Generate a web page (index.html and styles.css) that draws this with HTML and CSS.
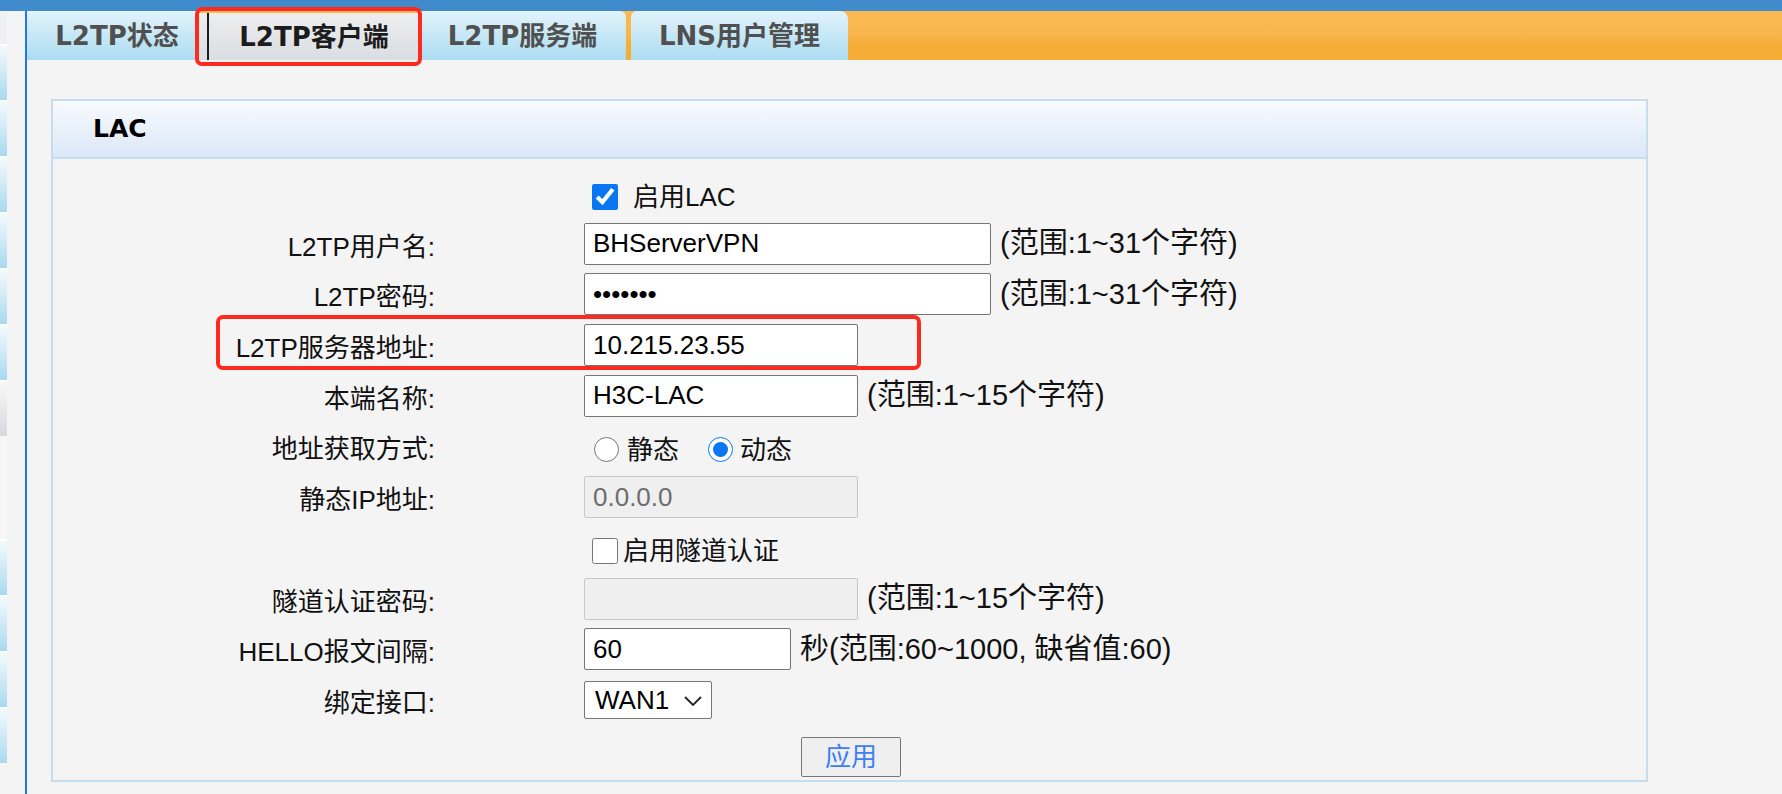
FILE: index.html
```html
<!DOCTYPE html>
<html lang="zh-CN">
<head>
<meta charset="utf-8">
<title>L2TP客户端</title>
<link rel="stylesheet" href="styles.css">
</head>
<body>
<div class="topbar"></div>
<div class="layout">
  <nav class="sidenav">
    <div class="nav-head"></div>
    <div class="nav-item"></div>
    <div class="nav-item"></div>
    <div class="nav-item"></div>
    <div class="nav-item"></div>
    <div class="nav-item"></div>
    <div class="nav-item"></div>
    <div class="nav-item nav-current"></div>
    <div class="nav-gap"></div>
    <div class="nav-item"></div>
    <div class="nav-item"></div>
    <div class="nav-item"></div>
    <div class="nav-item"></div>
  </nav>
  <main class="main">
    <div class="tabbar">
      <div class="tab tab-first">L2TP状态</div>
      <div class="tab tab-active">L2TP客户端</div>
      <div class="tab tab-third">L2TP服务端</div>
      <div class="tab tab-last">LNS用户管理</div>
    </div>
    <div class="content">
      <section class="panel">
        <div class="panel-head">LAC</div>
        <div class="panel-body">
          <div class="form">
            <div class="lbl"></div>
            <div class="ctl"><label class="check check-lac"><input type="checkbox" checked><span>启用LAC</span></label></div>

            <div class="lbl">L2TP用户名:</div>
            <div class="ctl"><input class="inp w-lg" type="text" value="BHServerVPN"><span class="hint">(范围:1~31个字符)</span></div>

            <div class="lbl">L2TP密码:</div>
            <div class="ctl"><input class="inp w-lg" type="password" value="1234567"><span class="hint">(范围:1~31个字符)</span></div>

            <div class="lbl">L2TP服务器地址:</div>
            <div class="ctl"><input class="inp w-md" type="text" value="10.215.23.55"></div>

            <div class="lbl">本端名称:</div>
            <div class="ctl"><input class="inp w-md" type="text" value="H3C-LAC"><span class="hint">(范围:1~15个字符)</span></div>

            <div class="lbl">地址获取方式:</div>
            <div class="ctl radios">
              <label class="radio"><input type="radio" name="mode"><span>静态</span></label>
              <label class="radio"><input type="radio" name="mode" checked><span>动态</span></label>
            </div>

            <div class="lbl">静态IP地址:</div>
            <div class="ctl"><input class="inp w-md" type="text" value="0.0.0.0" disabled></div>

            <div class="lbl"></div>
            <div class="ctl"><label class="check check-tunnel"><input type="checkbox"><span>启用隧道认证</span></label></div>

            <div class="lbl">隧道认证密码:</div>
            <div class="ctl"><input class="inp w-md" type="password" value="" disabled><span class="hint">(范围:1~15个字符)</span></div>

            <div class="lbl">HELLO报文间隔:</div>
            <div class="ctl"><input class="inp w-sm" type="text" value="60"><span class="hint">秒(范围:60~1000, 缺省值:60)</span></div>

            <div class="lbl">绑定接口:</div>
            <div class="ctl">
              <div class="select-wrap">
                <select class="sel"><option>WAN1</option></select>
                <svg class="chev" width="18" height="10" viewBox="0 0 18 10"><path d="M1 1 L9 9 L17 1" fill="none" stroke="#222" stroke-width="1.8"/></svg>
              </div>
            </div>
          </div>
          <div class="actions"><button class="btn" type="button">应用</button></div>
        </div>
      </section>
    </div>
  </main>
</div>
<div class="mark mark-tab"></div>
<div class="mark mark-server"></div>
</body>
</html>
```

FILE: styles.css
```css
html, body {
  margin: 0;
  padding: 0;
}
body {
  position: relative;
  width: 1782px;
  height: 794px;
  overflow: hidden;
  background: #f4f4f4;
  font-family: "Liberation Sans", "Noto Sans CJK SC", sans-serif;
  color: #111;
}
.topbar {
  height: 11px;
  background: #3f8bcb;
}
.layout {
  display: flex;
  height: 783px;
}
.sidenav {
  width: 7px;
  margin-right: 18px;
  display: flex;
  flex-direction: column;
}
.nav-head {
  height: 33px;
  background: #eef0f2;
}
.nav-item {
  height: 54px;
  border-top: 2px solid #ffffff;
  background: linear-gradient(#f3fafd, #a9d9ef);
}
.nav-current {
  background: linear-gradient(#f6f7f8, #d5d9de);
}
.nav-gap {
  height: 103px;
  background: #f7f7f7;
}
.main {
  flex: 1;
  border-left: 2px solid #1f77ee;
  display: flex;
  flex-direction: column;
}
.tabbar {
  height: 49px;
  display: flex;
  align-items: flex-end;
  background: linear-gradient(#f9b850 0%, #f9b750 45%, #f6ad36 70%, #f6ad35 100%);
}
.tab {
  height: 49px;
  display: flex;
  align-items: center;
  justify-content: center;
  box-sizing: border-box;
  background: linear-gradient(#e2f3fb, #abdcf1);
  font-family: "DejaVu Sans", "Noto Sans CJK SC", sans-serif;
  font-weight: bold;
  font-size: 26px;
  color: #505050;
  line-height: 1;
}
.tab-first {
  width: 172px;
  padding-left: 8px;
}
.tab-active {
  position: relative;
  width: 220px;
  height: 47px;
  padding-left: 10px;
  background: linear-gradient(#eeeeee, #d9dde2);
  color: #1c1c1c;
}
.tab-active::before {
  content: "";
  position: absolute;
  left: 8px;
  top: 0;
  bottom: 0;
  width: 2px;
  background: #1c1c1c;
}
.tab-third {
  width: 207px;
  border-top-right-radius: 6px;
}
.tab-last {
  width: 217px;
  margin-left: 5px;
  border-top-left-radius: 6px;
  border-top-right-radius: 8px;
}
.content {
  padding: 39px 134px 0 24px;
}
.panel {
  border: 2px solid #c6dcef;
  background: #f4f4f4;
}
.panel-head {
  height: 56px;
  border-bottom: 2px solid #c6dcef;
  background: linear-gradient(#f8fafd, #dbe8f8);
  padding-left: 40px;
  font-family: "DejaVu Sans", "Noto Sans CJK SC", sans-serif;
  font-weight: bold;
  font-size: 25px;
  line-height: 56px;
  color: #000;
}
.panel-body {
  padding: 13px 0 3px;
}
.form {
  display: grid;
  grid-template-columns: 384px 1fr;
  grid-auto-rows: 42px;
  column-gap: 147px;
  row-gap: 8.7px;
}
.lbl {
  display: flex;
  align-items: center;
  justify-content: flex-end;
  padding-right: 2px;
  padding-top: 6px;
  font-size: 26px;
  line-height: 1;
  color: #111;
  white-space: nowrap;
}
.ctl {
  display: flex;
  align-items: center;
  gap: 9px;
  font-size: 26px;
}
.inp {
  box-sizing: border-box;
  height: 42px;
  margin: 0;
  border: 1px solid #767676;
  border-radius: 2px;
  background: #fff;
  padding: 0 8px;
  font-family: "Liberation Sans", "Noto Sans CJK SC", sans-serif;
  font-size: 26px;
  color: #000;
  outline: none;
}
.inp:disabled {
  background: #efefef;
  border-color: #c9c9c9;
  color: #6d6d6d;
}
.w-lg { width: 407px; }
.w-md { width: 274px; }
.w-sm { width: 207px; }
.hint {
  font-size: 29px;
  line-height: 1;
  color: #111;
  white-space: nowrap;
}
.hint-wide {
  letter-spacing: 0.3px;
}
.check {
  display: flex;
  align-items: center;
  margin-left: 8px;
  margin-top: 7px;
  line-height: 1;
}
.check input {
  width: 26px;
  height: 26px;
  margin: 0;
  accent-color: #0b76f2;
}
.check-lac span { margin-left: 15px; }
.check-tunnel span { margin-left: 5px; }
.radios {
  gap: 0;
  padding-top: 7px;
}
.radio {
  display: flex;
  align-items: center;
  line-height: 1;
}
.radio input {
  width: 25px;
  height: 25px;
  margin: 0;
  accent-color: #0b76f2;
}
.radio span { margin-left: 8px; }
.radio:first-child { margin-left: 10px; }
.radio + .radio { margin-left: 29px; }
.radio + .radio span { margin-left: 7px; }
.select-wrap {
  position: relative;
  width: 128px;
  height: 38px;
}
.sel {
  appearance: none;
  -webkit-appearance: none;
  box-sizing: border-box;
  width: 128px;
  height: 38px;
  margin: 0;
  border: 1px solid #767676;
  border-radius: 2px;
  background: #fff;
  padding: 0 0 0 10px;
  font-family: "Liberation Sans", "Noto Sans CJK SC", sans-serif;
  font-size: 26px;
  color: #000;
}
.chev {
  position: absolute;
  right: 10px;
  top: 15px;
  pointer-events: none;
}
.actions {
  margin-top: 16px;
  text-align: center;
  padding-left: 3px;
}
.btn {
  box-sizing: border-box;
  width: 100px;
  height: 40px;
  margin: 0;
  border: 1px solid #767676;
  border-radius: 2px;
  background: #efefef;
  font-family: "Liberation Sans", "Noto Sans CJK SC", sans-serif;
  font-size: 26px;
  line-height: 1;
  color: #3d7ef5;
  padding: 0;
}
.mark {
  position: absolute;
  box-sizing: border-box;
  border: 4px solid #ff2a1f;
  border-radius: 7px;
  pointer-events: none;
}
.mark-tab {
  left: 195px;
  top: 7px;
  width: 227px;
  height: 59px;
}
.mark-server {
  left: 216px;
  top: 315px;
  width: 705px;
  height: 55px;
}
```
